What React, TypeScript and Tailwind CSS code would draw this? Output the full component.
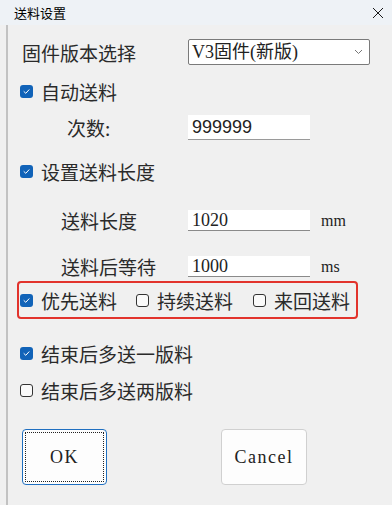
import React from 'react';

const CJK = "font-['Noto_Sans_CJK_SC',sans-serif]";
const SERIF = "font-['Liberation_Serif','Noto_Sans_CJK_SC',serif]";

function Check({ checked }: { checked: boolean }): React.JSX.Element {
  if (checked) {
    return (
      <span className="flex h-[13px] w-[13px] shrink-0 items-center justify-center rounded-[3px] bg-[#1163b8]">
        <svg width="9" height="9" viewBox="0 0 9 9" fill="none">
          <path d="M2 4.6 L3.8 6.3 L7 2.8" stroke="#ffffff" strokeWidth="1" strokeLinecap="round" strokeLinejoin="round" />
        </svg>
      </span>
    );
  }
  return <span className="h-[13px] w-[13px] shrink-0 rounded-[3px] border border-[#333333] bg-[#fafafa]" />;
}

function CheckRow({ checked, label, className = '' }: { checked: boolean; label: string; className?: string }): React.JSX.Element {
  return (
    <div className={`flex items-center gap-[8px] ${className}`}>
      <Check checked={checked} />
      <span className={`${CJK} text-[19px] leading-none text-[#2a2a2a]`}>{label}</span>
    </div>
  );
}

export default function App(): React.JSX.Element {
  return (
    <div className="flex h-[505px] w-[392px] flex-col overflow-hidden bg-[#f0f0f0]">
      {/* Title bar */}
      <div className="flex h-[25px] shrink-0 items-center justify-between bg-[#eef2f6] pl-[14px] pr-[8px]">
        <span className={`${CJK} text-[13px] leading-none text-black`}>送料设置</span>
        <svg width="12" height="12" viewBox="0 0 12 12">
          <path d="M1 1 L11 11 M11 1 L1 11" stroke="#1a1a1a" strokeWidth="1" />
        </svg>
      </div>

      <div className="flex flex-1">
        <div className="ml-[6px] w-[2px] bg-[#c2c2c2]" />

        <div className="flex flex-1 flex-col">
          {/* firmware */}
          <div className="mt-[14px] flex h-[26px] items-center">
            <span className={`${CJK} ml-[14px] w-[166px] text-[19px] leading-none text-[#2a2a2a]`}>固件版本选择</span>
            <div className="flex h-[26px] w-[182px] items-center justify-between rounded-[2px] border border-[#7a7a7a] bg-white pl-[3px] pr-[6px]">
              <span className={`${SERIF} text-[18px] leading-none text-[#222]`}>V3固件(新版)</span>
              <svg width="9" height="6" viewBox="0 0 9 6" fill="none">
                <path d="M1 1 L4.5 4.5 L8 1" stroke="#777777" strokeWidth="1" />
              </svg>
            </div>
          </div>

          <CheckRow checked label="自动送料" className="ml-[12px] mt-[16px] h-[20px]" />

          {/* count */}
          <div className="mt-[14px] flex h-[25px] items-center">
            <span className={`${CJK} ml-[59px] w-[121px] text-[19px] leading-none text-[#2a2a2a]`}>次数:</span>
            <div className="flex h-[25px] w-[122px] items-center border-b border-[#9a9a9a] bg-white pl-[4px]">
              <span className="font-['Liberation_Sans',sans-serif] text-[18px] leading-none text-[#222]">999999</span>
            </div>
          </div>

          <CheckRow checked label="设置送料长度" className="ml-[12px] mt-[21px] h-[20px]" />

          {/* length */}
          <div className="mt-[29px] flex h-[21px] items-center">
            <span className={`${CJK} ml-[53px] w-[127px] text-[19px] leading-none text-[#2a2a2a]`}>送料长度</span>
            <div className="flex h-[21px] w-[122px] items-center border-b border-[#8a8a8a] bg-white pl-[4px]">
              <span className={`${SERIF} text-[18px] leading-none text-[#222]`}>1020</span>
            </div>
            <span className={`${SERIF} ml-[11px] text-[16px] leading-none text-[#222]`}>mm</span>
          </div>

          {/* wait */}
          <div className="mt-[25px] flex h-[21px] items-center">
            <span className={`${CJK} ml-[53px] w-[127px] text-[19px] leading-none text-[#2a2a2a]`}>送料后等待</span>
            <div className="flex h-[21px] w-[122px] items-center border-b border-[#8a8a8a] bg-white pl-[4px]">
              <span className={`${SERIF} text-[18px] leading-none text-[#222]`}>1000</span>
            </div>
            <span className={`${SERIF} ml-[11px] text-[16px] leading-none text-[#222]`}>ms</span>
          </div>

          {/* mode group */}
          <div className="ml-[9px] mt-[4px] flex h-[38px] w-[341px] items-center rounded-[4px] border-2 border-[#e2332c] pl-[1px]">
            <CheckRow checked label="优先送料" />
            <CheckRow checked={false} label="持续送料" className="ml-[19px]" />
            <CheckRow checked={false} label="来回送料" className="ml-[20px]" />
          </div>

          <CheckRow checked label="结束后多送一版料" className="ml-[12px] mt-[24px] h-[20px]" />
          <CheckRow checked={false} label="结束后多送两版料" className="ml-[12px] mt-[17px] h-[20px]" />

          {/* buttons */}
          <div className="ml-[14px] mt-[29px] flex h-[56px] gap-[114px]">
            <button className="flex h-[56px] w-[85px] items-center justify-center rounded-[4px] border border-[#1f6fc0] bg-[#fdfdfd] p-[2px]">
              <span className="flex h-full w-full items-center justify-center border border-dotted border-[#222]">
                <span className={`${SERIF} text-[18px] leading-none tracking-[1.5px] text-[#222]`}>OK</span>
              </span>
            </button>
            <button className="flex h-[56px] w-[86px] items-center justify-center rounded-[4px] border border-[#d0d0d0] bg-[#fdfdfd]">
              <span className={`${SERIF} text-[18px] leading-none tracking-[1.5px] text-[#222]`}>Cancel</span>
            </button>
          </div>
        </div>
      </div>
    </div>
  );
}
